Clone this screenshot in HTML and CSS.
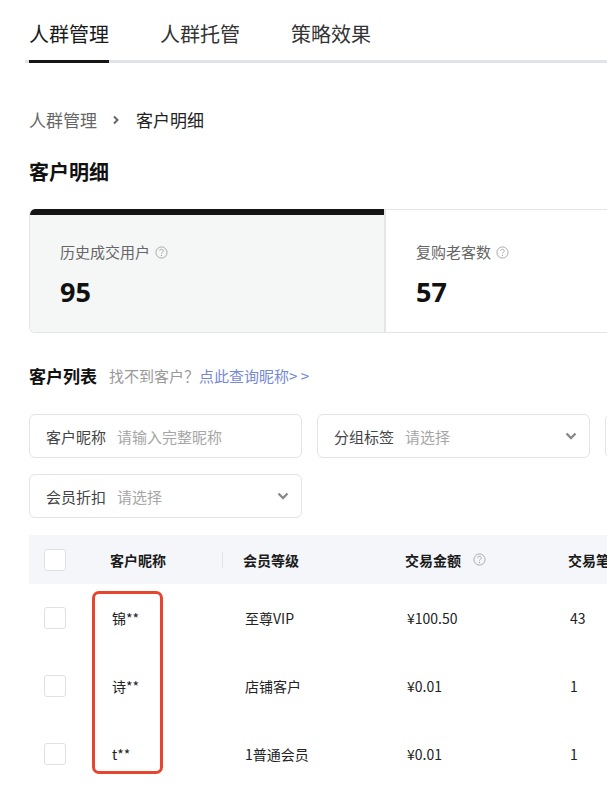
FILE: index.html
```html
<!DOCTYPE html>
<html lang="zh-CN">
<head>
    <meta charset="UTF-8">
    <meta name="viewport" content="width=device-width, initial-scale=1.0">
    <title>客户明细</title>
    <link rel="stylesheet" href="styles.css">
</head>
<body>
<div class="page">
    <!-- tabs -->
    <nav class="tabs">
        <a class="tab active">人群管理</a>
        <a class="tab">人群托管</a>
        <a class="tab">策略效果</a>
    </nav>

    <!-- breadcrumb -->
    <div class="crumbs">
        <span class="crumb-link">人群管理</span>
        <svg class="crumb-sep" width="8" height="10" viewBox="0 0 8 10"><path d="M2 1.5 L5.5 5 L2 8.5" fill="none" stroke="#666" stroke-width="2"/></svg>
        <span class="crumb-current">客户明细</span>
    </div>

    <h1 class="page-title">客户明细</h1>

    <!-- stat cards -->
    <div class="stats">
        <div class="stat active">
            <div class="stat-label">历史成交用户
                <svg class="help" width="13" height="13" viewBox="0 0 14 14"><circle cx="7" cy="7" r="6" fill="none" stroke="#a3a3a3" stroke-width="1"/><path d="M5 5.4 C5 4.2 5.9 3.6 7 3.6 C8.1 3.6 9 4.3 9 5.3 C9 6.5 7 6.7 7 8.2" fill="none" stroke="#a3a3a3" stroke-width="1"/><circle cx="7" cy="10.1" r="0.7" fill="#a3a3a3"/></svg>
            </div>
            <div class="stat-value">95</div>
        </div>
        <div class="stat">
            <div class="stat-label">复购老客数
                <svg class="help" width="13" height="13" viewBox="0 0 14 14"><circle cx="7" cy="7" r="6" fill="none" stroke="#a3a3a3" stroke-width="1"/><path d="M5 5.4 C5 4.2 5.9 3.6 7 3.6 C8.1 3.6 9 4.3 9 5.3 C9 6.5 7 6.7 7 8.2" fill="none" stroke="#a3a3a3" stroke-width="1"/><circle cx="7" cy="10.1" r="0.7" fill="#a3a3a3"/></svg>
            </div>
            <div class="stat-value">57</div>
        </div>
    </div>

    <!-- list title -->
    <div class="list-head">
        <h2 class="list-title">客户列表</h2>
        <span class="hint">找不到客户？</span>
        <a class="hint-link">点此查询昵称&gt; &gt;</a>
    </div>

    <!-- filters -->
    <div class="filters">
        <div class="field">
            <span class="field-label">客户昵称</span>
            <span class="field-placeholder">请输入完整昵称</span>
        </div>
        <div class="field">
            <span class="field-label">分组标签</span>
            <span class="field-placeholder">请选择</span>
            <svg class="arrow" width="12" height="8" viewBox="0 0 12 8"><path d="M1.5 1.5 L6 6 L10.5 1.5" fill="none" stroke="#8a8a8a" stroke-width="2.4"/></svg>
        </div>
        <div class="field"></div>
        <div class="field">
            <span class="field-label">会员折扣</span>
            <span class="field-placeholder">请选择</span>
            <svg class="arrow" width="12" height="8" viewBox="0 0 12 8"><path d="M1.5 1.5 L6 6 L10.5 1.5" fill="none" stroke="#8a8a8a" stroke-width="2.4"/></svg>
        </div>
    </div>

    <!-- table -->
    <div class="table">
        <div class="tr th">
            <div class="cell"><span class="check"></span></div>
            <div class="cell name-head">客户昵称<span class="divider"></span></div>
            <div class="cell">会员等级</div>
            <div class="cell">交易金额
                <svg class="help" width="13" height="13" viewBox="0 0 14 14"><circle cx="7" cy="7" r="6" fill="none" stroke="#a3a3a3" stroke-width="1"/><path d="M5 5.4 C5 4.2 5.9 3.6 7 3.6 C8.1 3.6 9 4.3 9 5.3 C9 6.5 7 6.7 7 8.2" fill="none" stroke="#a3a3a3" stroke-width="1"/><circle cx="7" cy="10.1" r="0.7" fill="#a3a3a3"/></svg>
            </div>
            <div class="cell">交易笔数</div>
        </div>
        <div class="tr">
            <div class="cell"><span class="check"></span></div>
            <div class="cell td">锦**</div>
            <div class="cell td">至尊VIP</div>
            <div class="cell td">¥100.50</div>
            <div class="cell td">43</div>
        </div>
        <div class="tr">
            <div class="cell"><span class="check"></span></div>
            <div class="cell td">诗**</div>
            <div class="cell td">店铺客户</div>
            <div class="cell td">¥0.01</div>
            <div class="cell td">1</div>
        </div>
        <div class="tr">
            <div class="cell"><span class="check"></span></div>
            <div class="cell td">t**</div>
            <div class="cell td">1普通会员</div>
            <div class="cell td">¥0.01</div>
            <div class="cell td">1</div>
        </div>

        <!-- highlight box over the nickname column -->
        <div class="mark"></div>
    </div>
</div>
</body>
</html>
```

FILE: styles.css
```css
body{
    margin:0;
    overflow:hidden;
    background:#fff;
    color:#222;
    font-family:"Noto Sans CJK SC", "Noto Sans", sans-serif;
}

.page{
    padding-left:29px;
    width:1400px;
}

/* TABS */
.tabs{
    display:flex;
    gap:51px;
    margin-left:-4px;
    padding-left:4px;
    border-bottom:3px solid #e1e3eb;
}

.tab{
    font-size:20px;
    line-height:28px;
    padding:20px 0 12px;
    color:#333;
    margin-bottom:-3px;
    border-bottom:3px solid transparent;
}

.tab.active{
    color:#1a1a1a;
    border-bottom-color:#161616;
}

/* BREADCRUMB */
.crumbs{
    display:flex;
    align-items:center;
    margin-top:45px;
    font-size:17px;
    line-height:24px;
}

.crumb-link{
    color:#666;
}

.crumb-sep{
    margin:0 16px 0 15px;
}

.crumb-current{
    color:#222;
}

.page-title{
    margin:26px 0 0;
    font-size:20px;
    line-height:28px;
    font-weight:bold;
    color:#111;
}

/* STAT CARDS */
.stats{
    display:flex;
    width:800px;
    margin-top:23px;
    border:1px solid #e4e4e4;
    border-top:none;
    border-radius:6px;
    overflow:hidden;
}

.stat{
    width:324px;
    padding:31px 0 23px 30px;
    border-top:1px solid #e4e4e4;
}

.stat + .stat{
    flex:1;
    border-left:2px solid #e6e6e6;
}

.stat.active{
    background:#f5f7f7;
    border-top:6px solid #151515;
    padding-top:26px;
}

.stat-label{
    display:flex;
    width:fit-content;
    align-items:center;
    gap:5px;
    font-size:15px;
    line-height:22px;
    color:#666;
}

.stat-value{
    width:fit-content;
    margin-top:12px;
    font-size:27px;
    line-height:34px;
    font-weight:bold;
    color:#111;
    font-family:"Noto Sans", sans-serif;
}

/* LIST HEAD */
.list-head{
    display:flex;
    align-items:center;
    margin-top:30px;
    line-height:26px;
}

.list-title{
    margin:0 12px 0 0;
    font-size:17px;
    font-weight:bold;
    color:#111;
}

.hint{
    font-size:15px;
    color:#999;
}

.hint-link{
    font-size:15px;
    color:#7589d2;
}

/* FILTERS */
.filters{
    display:grid;
    grid-template-columns:repeat(3, 273px);
    gap:16px 15px;
    margin-top:25px;
}

.field{
    display:flex;
    align-items:center;
    height:44px;
    box-sizing:border-box;
    padding:0 12px 0 16px;
    border:1px solid #e2e2ea;
    border-radius:6px;
    font-size:15px;
}

.field-label{
    color:#444;
    margin-right:11px;
}

.field-placeholder{
    color:#a6a6a6;
    flex:1;
}

/* TABLE */
.table{
    position:relative;
    margin-top:17px;
}

.tr{
    display:grid;
    grid-template-columns:81px 133px 162px 163px 160px;
    height:68px;
    align-items:center;
    font-size:14px;
}

.tr.th{
    height:49px;
    background:#f4f6f9;
    font-weight:bold;
    color:#1a1a1a;
}

.cell{
    display:flex;
    align-items:center;
    gap:6px;
}

.td{
    padding-left:2px;
    color:#222;
}

.name-head{
    justify-content:space-between;
    padding-right:20px;
}

.divider{
    width:1px;
    height:16px;
    background:#e3e3e3;
}

.th .help{
    margin-left:6px;
}

.check{
    display:block;
    width:22px;
    height:22px;
    box-sizing:border-box;
    margin-left:15px;
    border:1px solid #dfe1e8;
    border-radius:3px;
    background:#fff;
}

.mark{
    position:absolute;
    left:63px;
    top:56px;
    width:71px;
    height:183px;
    box-sizing:border-box;
    border:3px solid #e8452f;
    border-radius:7px;
}
```
